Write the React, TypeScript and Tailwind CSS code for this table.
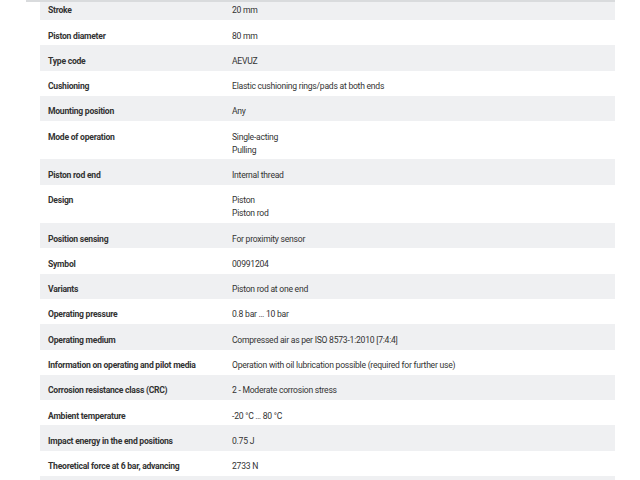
const specs: { label: string; value: string[] }[] = [
  { label: 'Stroke', value: ['20 mm'] },
  { label: 'Piston diameter', value: ['80 mm'] },
  { label: 'Type code', value: ['AEVUZ'] },
  { label: 'Cushioning', value: ['Elastic cushioning rings/pads at both ends'] },
  { label: 'Mounting position', value: ['Any'] },
  { label: 'Mode of operation', value: ['Single-acting', 'Pulling'] },
  { label: 'Piston rod end', value: ['Internal thread'] },
  { label: 'Design', value: ['Piston', 'Piston rod'] },
  { label: 'Position sensing', value: ['For proximity sensor'] },
  { label: 'Symbol', value: ['00991204'] },
  { label: 'Variants', value: ['Piston rod at one end'] },
  { label: 'Operating pressure', value: ['0.8 bar … 10 bar'] },
  { label: 'Operating medium', value: ['Compressed air as per ISO 8573-1:2010 [7:4:4]'] },
  { label: 'Information on operating and pilot media', value: ['Operation with oil lubrication possible (required for further use)'] },
  { label: 'Corrosion resistance class (CRC)', value: ['2 - Moderate corrosion stress'] },
  { label: 'Ambient temperature', value: ['-20 °C … 80 °C'] },
  { label: 'Impact energy in the end positions', value: ['0.75 J'] },
  { label: 'Theoretical force at 6 bar, advancing', value: ['2733 N'] },
  { label: 'Theoretical force at 6 bar, retracting', value: ['2733 N'] },
];

export default function App() {
  return (
    <div className="relative h-[480px] overflow-hidden bg-white font-['Roboto',sans-serif] text-[8.6px] leading-[13px] tracking-[-0.25px] text-[#333]">
      {/* header edge left over from the sticky bar above */}
      <div className="absolute left-[26px] top-0 z-10 h-[2px] w-[589px] bg-[#d9dbdd]" />

      <div className="ml-[40px] mt-[-5.3px] w-[575px]">
        {specs.map((s, i) => (
          <div key={s.label} className={`flex pt-[9.5px] pb-[2.8px] ${i % 2 === 0 ? 'bg-[#eff0f2]' : 'bg-white'}`}>
            <div className="w-[184px] shrink-0 pl-[8px] font-bold">{s.label}</div>
            <div className="pl-[8px]">
              {s.value.map(v => <div key={v}>{v}</div>)}
            </div>
          </div>
        ))}
      </div>
    </div>
  );
}
